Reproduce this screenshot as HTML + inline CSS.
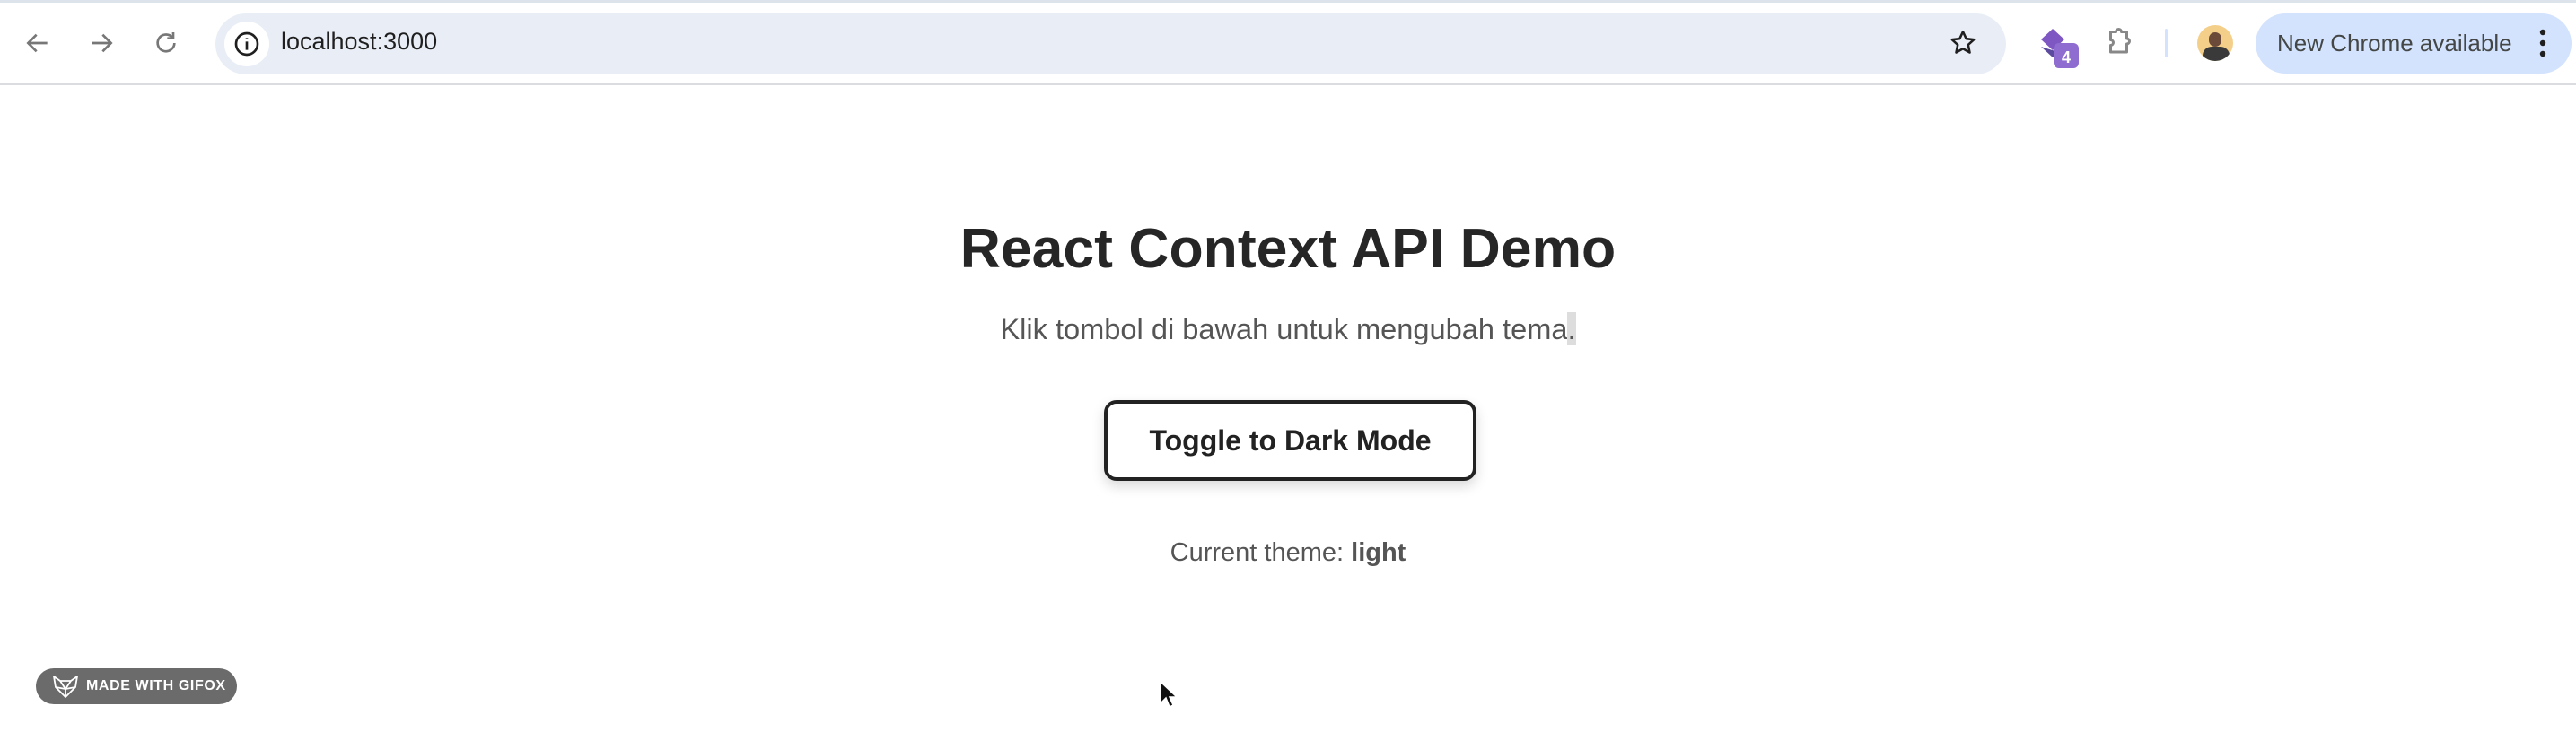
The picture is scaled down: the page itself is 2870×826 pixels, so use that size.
<!DOCTYPE html>
<html><head><meta charset="utf-8"><style>
*{margin:0;padding:0;box-sizing:border-box}
body{width:2870px;height:826px;background:#fff;font-family:"Liberation Sans",sans-serif;position:relative;overflow:hidden}
.top{position:absolute;left:0;top:0;width:2870px;height:95px;background:#fff;border-bottom:2px solid #dadce0}
.strip{position:absolute;left:0;top:0;width:2870px;height:3px;background:#dde3ea}
.url{position:absolute;left:240px;top:15px;width:1995px;height:68px;border-radius:34px;background:#e9eef6}
.info{position:absolute;left:250px;top:24px;width:50px;height:50px;border-radius:25px;background:#fff}
.urltext{position:absolute;left:313px;top:31px;font-size:27px;color:#1f1f1f}
.pill{position:absolute;left:2513px;top:15px;width:352px;height:67px;border-radius:34px;background:#d3e3fd}
.pill span{position:absolute;left:24px;top:18px;font-size:26px;color:#444746}
h1{position:absolute;left:0;width:2870px;top:241px;text-align:center;font-size:62.5px;font-weight:bold;color:#262626}
.sub{position:absolute;left:0;width:2870px;top:348px;text-align:center;font-size:32.6px;color:#555}
.sub i{font-style:normal;background:#ddd}
.btn{position:absolute;left:1230px;top:446px;width:415px;height:90px;border:4px solid #222;border-radius:14px;background:#fff;box-shadow:0 6px 14px rgba(0,0,0,.15);text-align:center;line-height:82px;font-size:32px;font-weight:bold;color:#222}
.cur{position:absolute;left:0;width:2870px;top:600px;text-align:center;font-size:29px;color:#555}
.gif{position:absolute;left:40px;top:745px;width:224px;height:40px;border-radius:20px;background:#6b6b6b;color:#fff;font-weight:bold;font-size:16px;line-height:40px;padding-left:56px;letter-spacing:.6px}
</style></head><body>
<div class="top"></div><div class="strip"></div>
<svg style="position:absolute;left:26px;top:32px" width="32" height="32" viewBox="0 0 24 24"><path d="M20 12H5M11 5l-7 7 7 7" fill="none" stroke="#777" stroke-width="2"/></svg>
<svg style="position:absolute;left:97px;top:32px" width="32" height="32" viewBox="0 0 24 24"><path d="M4 12h15M13 5l7 7-7 7" fill="none" stroke="#777" stroke-width="2"/></svg>
<svg style="position:absolute;left:169px;top:32px" width="32" height="32" viewBox="0 0 24 24"><path d="M19 12a7 7 0 1 1-2-5M18 3v5h-5" fill="none" stroke="#777" stroke-width="2"/></svg>
<div class="url"></div><div class="info"></div>
<svg style="position:absolute;left:259px;top:33px" width="32" height="32" viewBox="0 0 24 24"><circle cx="12" cy="12" r="9" fill="none" stroke="#1f1f1f" stroke-width="2"/><path d="M12 10v7M12 7v1" stroke="#1f1f1f" stroke-width="2"/></svg>
<div class="urltext">localhost:3000</div>
<svg style="position:absolute;left:2170px;top:31px" width="34" height="34" viewBox="0 0 24 24"><path d="M12 3l2.6 5.6 6 .7-4.5 4.1 1.2 6L12 16.4 6.7 19.4l1.2-6L3.4 9.3l6-.7z" fill="none" stroke="#1f1f1f" stroke-width="1.8" stroke-linejoin="round"/></svg>
<svg style="position:absolute;left:2270px;top:30px" width="50" height="48" viewBox="0 0 50 48"><path d="M4 14L17 2l13 12-13 12z" fill="#7e57c2"/><path d="M4 22l13 12 6-6" fill="#5c4a9e"/><rect x="18" y="18" width="28" height="28" rx="6" fill="#8e6cd0"/><text x="32" y="40" font-size="18" font-weight="bold" fill="#fff" text-anchor="middle" font-family="Liberation Sans">4</text></svg>
<svg style="position:absolute;left:2344px;top:28px" width="36" height="36" viewBox="0 0 24 24"><path d="M5 5h4a2 2 0 0 1 4 0h4v5a2 2 0 0 1 0 4v6H5v-5a2 2 0 0 0 0-4z" fill="none" stroke="#888" stroke-width="2" stroke-linejoin="round"/></svg>
<div style="position:absolute;left:2412px;top:32px;width:3px;height:32px;background:#d3e3fd;border-radius:2px"></div>
<div style="position:absolute;left:2448px;top:28px;width:40px;height:40px;border-radius:20px;background:#f3cf8a;overflow:hidden"><div style="position:absolute;left:13px;top:8px;width:14px;height:16px;border-radius:7px;background:#6b4a3a"></div><div style="position:absolute;left:6px;top:24px;width:30px;height:20px;border-radius:10px 10px 0 0;background:#3a3a3a"></div></div>
<div class="pill"><span>New Chrome available</span></div>
<svg style="position:absolute;left:2826px;top:30px" width="14" height="36" viewBox="0 0 14 36"><circle cx="7" cy="6" r="3.2" fill="#1f1f1f"/><circle cx="7" cy="18" r="3.2" fill="#1f1f1f"/><circle cx="7" cy="30" r="3.2" fill="#1f1f1f"/></svg>
<h1>React Context API Demo</h1>
<div class="sub">Klik tombol di bawah untuk mengubah tema<i>.</i></div>
<div class="btn">Toggle to Dark Mode</div>
<div class="cur">Current theme: <b>light</b></div>
<div class="gif">MADE WITH GIFOX</div>
<svg style="position:absolute;left:58px;top:752px" width="30" height="27" viewBox="0 0 30 27"><path d="M2 2l7 5h12l7-5-2 12-11 11L4 14z M9 7l6 9 6-9 M4 14l11 2 11-2 M15 16v9" fill="none" stroke="#fff" stroke-width="1.8" stroke-linejoin="round"/></svg>
<svg style="position:absolute;left:1290px;top:758px" width="24" height="34" viewBox="0 0 24 34"><path d="M3 2v24l6-6 4 10 4-2-4-9h8z" fill="#111" stroke="#fff" stroke-width="1.5"/></svg>
</body></html>
